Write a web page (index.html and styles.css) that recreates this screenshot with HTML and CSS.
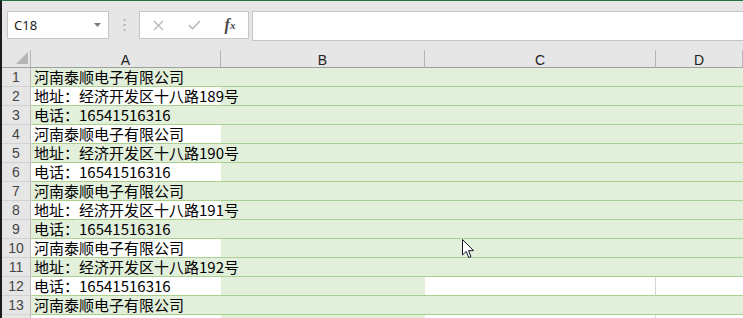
FILE: index.html
```html
<!DOCTYPE html>
<html lang="zh-CN">
<head>
    <meta charset="UTF-8">
    <meta name="viewport" content="width=device-width, initial-scale=1.0">
    <title>河南泰顺电子有限公司 - 工作表</title>
    <link rel="stylesheet" href="styles.css">
</head>
<body>
    <div class="app">
        <!-- Formula bar -->
        <div class="toolbar">
            <div class="namebox">
                <span>C18</span>
                <svg width="7" height="4" viewBox="0 0 7 4"><path d="M0 0 H7 L3.5 4 Z" fill="#7a7a7a"/></svg>
            </div>
            <div class="grip">
                <svg width="3" height="12" viewBox="0 0 3 12"><rect x="0.5" y="0" width="2" height="2" fill="#b4b4b4"/><rect x="0.5" y="5" width="2" height="2" fill="#b4b4b4"/><rect x="0.5" y="10" width="2" height="2" fill="#b4b4b4"/></svg>
            </div>
            <div class="fbtns">
                <span class="fbtn">
                    <svg width="11" height="11" viewBox="0 0 11 11"><path d="M1 1 L10 10 M10 1 L1 10" stroke="#b9b9b9" stroke-width="1.4" fill="none"/></svg>
                </span>
                <span class="fbtn">
                    <svg width="13" height="10" viewBox="0 0 13 10"><path d="M1 5 L4.5 8.8 L12 1" stroke="#b9b9b9" stroke-width="1.6" fill="none"/></svg>
                </span>
                <span class="fbtn fx">f<sub>x</sub></span>
            </div>
            <div class="fbar"></div>
        </div>

        <!-- Sheet -->
        <div class="sheet">
            <div class="hd corner">
                <svg width="12" height="12" viewBox="0 0 12 12"><path d="M12 0 V12 H0 Z" fill="#b4b4b4"/></svg>
            </div>
            <div class="hd">A</div>
            <div class="hd">B</div>
            <div class="hd">C</div>
            <div class="hd">D</div>

            <div class="rh">1</div>
            <div class="cell a g">河南泰顺电子有限公司</div><div class="cell g"></div><div class="cell g"></div><div class="cell g"></div>
            <div class="rh">2</div>
            <div class="cell a w">地址<span class="colon">：</span>经济开发区十八路189号</div><div class="cell g"></div><div class="cell g"></div><div class="cell g"></div>
            <div class="rh">3</div>
            <div class="cell a g">电话<span class="colon">：</span>16541516316</div><div class="cell g"></div><div class="cell g"></div><div class="cell g"></div>
            <div class="rh">4</div>
            <div class="cell a w">河南泰顺电子有限公司</div><div class="cell g"></div><div class="cell g"></div><div class="cell g"></div>
            <div class="rh">5</div>
            <div class="cell a g">地址<span class="colon">：</span>经济开发区十八路190号</div><div class="cell g"></div><div class="cell g"></div><div class="cell g"></div>
            <div class="rh">6</div>
            <div class="cell a w">电话<span class="colon">：</span>16541516316</div><div class="cell g"></div><div class="cell g"></div><div class="cell g"></div>
            <div class="rh">7</div>
            <div class="cell a g">河南泰顺电子有限公司</div><div class="cell g"></div><div class="cell g"></div><div class="cell g"></div>
            <div class="rh">8</div>
            <div class="cell a w">地址<span class="colon">：</span>经济开发区十八路191号</div><div class="cell g"></div><div class="cell g"></div><div class="cell g"></div>
            <div class="rh">9</div>
            <div class="cell a g">电话<span class="colon">：</span>16541516316</div><div class="cell g"></div><div class="cell g"></div><div class="cell g"></div>
            <div class="rh">10</div>
            <div class="cell a w">河南泰顺电子有限公司</div><div class="cell g"></div><div class="cell g"></div><div class="cell g"></div>
            <div class="rh">11</div>
            <div class="cell a g">地址<span class="colon">：</span>经济开发区十八路192号</div><div class="cell g"></div><div class="cell g"></div><div class="cell g"></div>
            <div class="rh">12</div>
            <div class="cell a w">电话<span class="colon">：</span>16541516316</div><div class="cell g"></div><div class="cell w c"></div><div class="cell w"></div>
            <div class="rh">13</div>
            <div class="cell a g">河南泰顺电子有限公司</div><div class="cell g"></div><div class="cell g"></div><div class="cell g"></div>
            <div class="rh"></div>
            <div class="cell a w"></div><div class="cell g"></div><div class="cell w c"></div><div class="cell w"></div>
        </div>

        <!-- mouse pointer -->
        <svg class="pointer" width="13" height="20" viewBox="0 0 13 20">
            <path d="M0.5 0.5 V16 L4.2 12.4 L6.8 18.6 L9 17.6 L6.5 11.6 H11.5 Z" fill="#fff" stroke="#161630" stroke-width="1" stroke-linejoin="miter"/>
        </svg>
    </div>
</body>
</html>
```

FILE: styles.css
```css
/* styles.css */
body {
margin: 0;
background-color: #e6e6e6;
}

.app {
position: relative;
width: 743px;
height: 318px;
overflow: hidden;
box-sizing: border-box;
border-left: 2px solid #1c1c1c;
border-top: 1px solid #217346;
background-color: #e6e6e6;
}

/* formula bar */
.toolbar {
display: flex;
align-items: flex-start;
height: 47px;
box-sizing: border-box;
padding: 10px 0 0 5px;
}

.namebox {
display: flex;
justify-content: space-between;
align-items: center;
width: 102px;
height: 28px;
box-sizing: border-box;
padding: 0 7px 0 6px;
background-color: #fff;
border: 1px solid #c6c6c6;
font-family: "Noto Sans", "Liberation Sans", sans-serif;
font-size: 13px;
color: #222;
}

.grip {
display: flex;
justify-content: center;
align-items: center;
width: 30px;
height: 28px;
}

.fbtns {
display: flex;
width: 110px;
height: 28px;
box-sizing: border-box;
background-color: #fff;
border: 1px solid #c6c6c6;
}

.fbtn {
display: flex;
justify-content: center;
align-items: center;
width: 36px;
}

.fx {
font-family: "Liberation Serif", serif;
font-style: italic;
font-weight: bold;
font-size: 16px;
color: #4a4a4a;
}

.fx sub {
font-size: 11px;
vertical-align: -1px;
}

.fbar {
flex: 1;
height: 28px;
margin-left: 3px;
margin-right: -2px;
background-color: #fff;
border: 1px solid #c6c6c6;
}

/* sheet grid */
.sheet {
display: grid;
grid-template-columns: 29px 190px 204px 231px 1fr;
grid-template-rows: 20px;
grid-auto-rows: 19px;
}

.hd {
display: flex;
justify-content: center;
align-items: center;
margin-top: 2px;
padding-top: 2px;
box-sizing: border-box;
border-right: 1px solid #b4b4b4;
border-bottom: 1px solid #9f9f9f;
font-family: "Liberation Sans", sans-serif;
font-size: 14px;
color: #222;
}

.corner {
justify-content: flex-end;
align-items: flex-end;
padding: 0 2px 3px 0;
}

.rh {
display: flex;
justify-content: center;
align-items: center;
box-sizing: border-box;
border-right: 1px solid #bcbcbc;
border-bottom: 1px solid #d2d2d2;
font-family: "Liberation Sans", sans-serif;
font-size: 14px;
color: #444;
}

.cell {
box-sizing: border-box;
padding-left: 3px;
border-bottom: 1px solid #a9d08e;
font-family: "Noto Sans CJK SC", "Noto Sans", sans-serif;
font-size: 15px;
line-height: 18px;
color: #000;
white-space: nowrap;
}

/* the full-width colon sits centred in the reference font */
.colon {
font-family: "Noto Sans CJK TC", "Noto Sans CJK SC", sans-serif;
}

/* column A text spills over column B, like a real sheet */
.cell.a {
z-index: 1;
}

.g {
background-color: #e2efda;
}

.w {
background-color: #fff;
}

.w.c {
border-right: 1px solid #d4d4d4;
}

.pointer {
position: absolute;
left: 460px;
top: 238px;
}
```
